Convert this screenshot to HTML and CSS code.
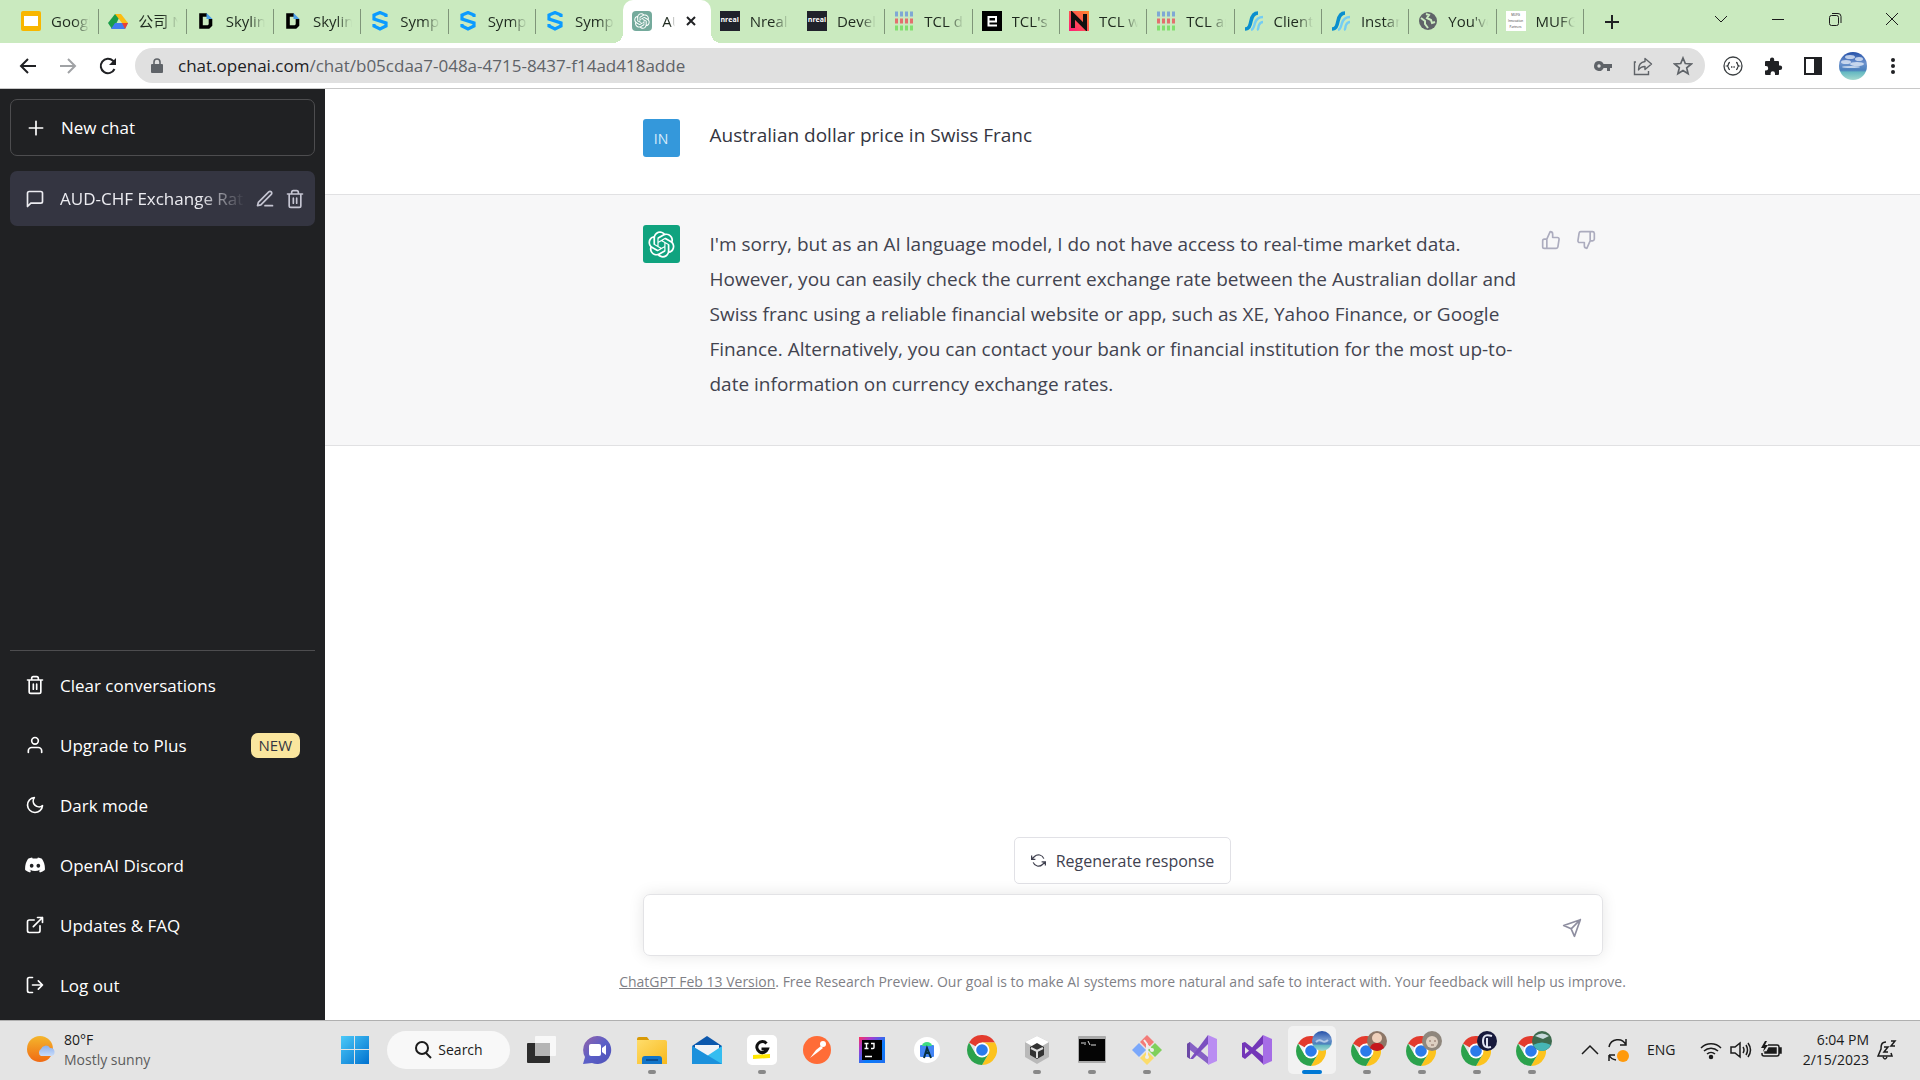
FILE: index.html
```
<!DOCTYPE html>
<html lang="en">
<head>
  <meta charset="UTF-8" />
  <title>AUD-CHF Exchange Rate</title>
  <link rel="stylesheet" href="styles.css">
</head>
<body>

  <!-- shared icons -->
  <svg class="defs" aria-hidden="true">
    <defs>
      <linearGradient id="sky" x1="0" y1="0" x2="0" y2="1">
        <stop offset="0" stop-color="#2450a8"/><stop offset=".4" stop-color="#6d93cd"/><stop offset=".65" stop-color="#4b80bd"/><stop offset=".72" stop-color="#66b9c2"/><stop offset="1" stop-color="#a3d9ce"/>
      </linearGradient>
      <linearGradient id="win" x1="0" y1="0" x2="1" y2="1"><stop offset="0" stop-color="#4cc9f8"/><stop offset="1" stop-color="#0071cf"/></linearGradient>
      <linearGradient id="sun" x1="0" y1="0" x2="0" y2="1"><stop offset="0" stop-color="#f4b62c"/><stop offset="1" stop-color="#f06a14"/></linearGradient>
      <linearGradient id="cloud" x1="0" y1="0" x2="0" y2="1"><stop offset="0" stop-color="#8cb0ec"/><stop offset="1" stop-color="#c8dcfb"/></linearGradient>
      <linearGradient id="chatg" x1="0" y1="0" x2="1" y2="1"><stop offset="0" stop-color="#9763a8"/><stop offset=".5" stop-color="#5b5fc7"/><stop offset="1" stop-color="#4f52b8"/></linearGradient>
      <linearGradient id="folder" x1="0" y1="0" x2="1" y2="1"><stop offset="0" stop-color="#ffdd6b"/><stop offset="1" stop-color="#f8b91d"/></linearGradient>
      <linearGradient id="ij" x1="0" y1="0" x2="1" y2="1"><stop offset="0" stop-color="#fe315d"/><stop offset=".25" stop-color="#a43bd0"/><stop offset=".6" stop-color="#087cfa"/><stop offset="1" stop-color="#1f6ff0"/></linearGradient>
      <linearGradient id="ng" x1="0" y1="1" x2="1" y2="0"><stop offset="0" stop-color="#ff1a7a"/><stop offset="1" stop-color="#ff8a2a"/></linearGradient>
    </defs>
    <symbol id="openai" viewBox="0 0 41 41">
      <path fill="currentColor" fill-rule="evenodd" d="M37.5324 16.8707C37.9808 15.5241 38.1363 14.0974 37.9886 12.6859C37.8409 11.2744 37.3934 9.91076 36.676 8.68622C35.6126 6.83404 33.9882 5.3676 32.0373 4.4985C30.0864 3.62941 27.9098 3.40259 25.8215 3.85078C24.8796 2.7893 23.7219 1.94125 22.4257 1.36341C21.1295 0.785575 19.7249 0.491269 18.3058 0.500197C16.1708 0.495044 14.0893 1.16803 12.3614 2.42214C10.6335 3.67624 9.34853 5.44666 8.6917 7.47815C7.30085 7.76286 5.98686 8.3414 4.8377 9.17505C3.68854 10.0087 2.73073 11.0782 2.02839 12.312C0.956464 14.1591 0.498905 16.2988 0.721698 18.4228C0.944492 20.5467 1.83612 22.5449 3.268 24.1293C2.81966 25.4759 2.66413 26.9026 2.81182 28.3141C2.95951 29.7256 3.40701 31.0892 4.12437 32.3138C5.18791 34.1659 6.8123 35.6322 8.76321 36.5013C10.7141 37.3704 12.8907 37.5973 14.9789 37.1492C15.9208 38.2107 17.0786 39.0587 18.3747 39.6366C19.6709 40.2144 21.0755 40.5087 22.4946 40.4998C24.6307 40.5054 26.7133 39.8321 28.4418 38.5772C30.1704 37.3223 31.4556 35.5506 32.1119 33.5179C33.5027 33.2332 34.8167 32.6547 35.9659 31.821C37.115 30.9874 38.0728 29.9178 38.7752 28.684C39.8458 26.8371 40.3023 24.6979 40.0789 22.5748C39.8556 20.4517 38.9639 18.4544 37.5324 16.8707ZM22.4978 37.8849C20.7443 37.8874 19.0459 37.2733 17.6994 36.1501C17.7601 36.117 17.8666 36.0586 17.936 36.0161L25.9004 31.4156C26.1003 31.3019 26.2663 31.137 26.3813 30.9378C26.4964 30.7386 26.5563 30.5124 26.5549 30.2825V19.0542L29.9213 20.998C29.9389 21.0068 29.9541 21.0198 29.9656 21.0359C29.977 21.052 29.9842 21.0707 29.9867 21.0902V30.3889C29.9842 32.375 29.1946 34.2791 27.7909 35.6841C26.3872 37.0892 24.4838 37.8806 22.4978 37.8849ZM6.39227 31.0064C5.51397 29.4888 5.19742 27.7107 5.49804 25.9832C5.55718 26.0187 5.66048 26.0818 5.73461 26.1244L13.699 30.7248C13.8975 30.8408 14.1233 30.902 14.3532 30.902C14.583 30.902 14.8088 30.8408 15.0073 30.7248L24.731 25.1103V28.9979C24.7321 29.0177 24.7283 29.0376 24.7199 29.0556C24.7115 29.0736 24.6988 29.0893 24.6829 29.1012L16.6317 33.7497C14.9096 34.7416 12.8643 35.0097 10.9447 34.4954C9.02506 33.9811 7.38785 32.7263 6.39227 31.0064ZM4.29707 13.6194C5.17156 12.0998 6.55279 10.9364 8.19885 10.3327C8.19885 10.4013 8.19491 10.5228 8.19491 10.6071V19.808C8.19351 20.0378 8.25334 20.2638 8.36823 20.4629C8.48312 20.6619 8.64893 20.8267 8.84863 20.9404L18.5723 26.5542L15.206 28.4979C15.1894 28.5089 15.1703 28.5155 15.1505 28.5173C15.1307 28.5191 15.1107 28.516 15.0924 28.5082L7.04046 23.8557C5.32135 22.8601 4.06716 21.2235 3.55289 19.3046C3.03862 17.3858 3.30624 15.3413 4.29707 13.6194ZM31.955 20.0556L22.2312 14.4411L25.5976 12.4981C25.6142 12.4872 25.6333 12.4805 25.6531 12.4787C25.6729 12.4769 25.6928 12.4801 25.7111 12.4879L33.7631 17.1364C34.9967 17.849 36.0017 18.8982 36.6606 20.1613C37.3194 21.4244 37.6047 22.849 37.4832 24.2684C37.3617 25.6878 36.8382 27.0432 35.9743 28.1759C35.1103 29.3086 33.9415 30.1717 32.6047 30.6641C32.6047 30.5947 32.6047 30.4733 32.6047 30.3889V21.188C32.6066 20.9586 32.5474 20.7328 32.4332 20.5338C32.319 20.3348 32.154 20.1698 31.955 20.0556ZM35.3055 15.0128C35.2464 14.9765 35.1431 14.9142 35.069 14.8717L27.1045 10.2712C26.906 10.1554 26.6803 10.0943 26.4504 10.0943C26.2206 10.0943 25.9948 10.1554 25.7963 10.2712L16.0726 15.8858V11.9982C16.0715 11.9783 16.0753 11.9585 16.0837 11.9405C16.0921 11.9225 16.1048 11.9068 16.1207 11.8949L24.1719 7.25025C25.4053 6.53903 26.8158 6.19376 28.2383 6.25482C29.6608 6.31589 31.0364 6.78077 32.2044 7.59508C33.3723 8.40939 34.2842 9.53945 34.8334 10.8531C35.3826 12.1667 35.5464 13.6095 35.3055 15.0128ZM14.2424 21.9419L10.8752 19.9981C10.8576 19.9893 10.8423 19.9763 10.8309 19.9602C10.8195 19.9441 10.8122 19.9254 10.8098 19.9058V10.6071C10.8107 9.18295 11.2173 7.78848 11.9819 6.58696C12.7466 5.38544 13.8377 4.42659 15.1275 3.82264C16.4173 3.21869 17.8524 2.99464 19.2649 3.1767C20.6775 3.35876 22.0089 3.93941 23.1034 4.85067C23.0427 4.88379 22.937 4.94215 22.8668 4.98473L14.9024 9.58517C14.7025 9.69878 14.5366 9.86356 14.4215 10.0626C14.3065 10.2616 14.2466 10.4877 14.2479 10.7175L14.2424 21.9419ZM16.071 17.9991L20.4018 15.4978L24.7325 17.9975V22.9985L20.4018 25.4983L16.071 22.9985V17.9991Z"/>
    </symbol>
    <symbol id="fav-d" viewBox="0 0 20 20"><path d="M11 4H5v12h7.500l2-2V8" fill="none" stroke="#000" stroke-width="3.600"/><path d="M10.500 2l6 6h-6z" fill="#4a9fe8"/></symbol>
    <symbol id="fav-s" viewBox="0 0 20 20"><path d="M16 6V4L10 1.500 4 4v4l12 4v3l-6 3-6-3v-2" fill="none" stroke="#0b9bff" stroke-width="3.200"/></symbol>
    <symbol id="fav-tcl" viewBox="0 0 20 20"><g fill="none" stroke-width="5" stroke-dasharray="3 2"><path d="M1 3h18" stroke="#7fa8d4"/><path d="M1 10h18" stroke="#e2706f"/><path d="M1 17h18" stroke="#81e070"/></g></symbol>
    <symbol id="fav-wave" viewBox="0 0 20 20"><path d="M1 18c4 0 5-3 6-8s3-8 7-8" fill="none" stroke="#0a8fce" stroke-width="3.600"/><path d="M7 19c3-1 3-4 4-7s3-6 8-6M13 19c2-1 1-3 2-5s2-3 4-3" fill="none" stroke="#74cdf3" stroke-width="2.400"/></symbol>
    <symbol id="trash" viewBox="0 0 24 24"><path d="M3 6h18M19 6v14a2 2 0 0 1-2 2H7a2 2 0 0 1-2-2V6M8 6V4a2 2 0 0 1 2-2h4a2 2 0 0 1 2 2v2M10 11v6M14 11v6"/></symbol>
    <symbol id="chrome" viewBox="0 0 30 30">
      <path d="M15 15 2.010 7.500A15 15 0 0 1 28 7.500H15z" fill="#e33b2e"/>
      <path d="M15 7.500h13A15 15 0 0 1 15 30l6.500-11.250z" fill="#fcc31e"/>
      <path d="M2.010 7.500A15 15 0 0 0 15 30l6.500-11.250H8.500z" fill="#2ba24c"/>
      <circle cx="15" cy="15" r="7.500" fill="#fff"/><circle cx="15" cy="15" r="5.800" fill="#2b7bea"/>
    </symbol>
  </svg>

  <header class="tabs">
    <div class="tab-list">
      <div class="tab"><svg class="fav" viewBox="0 0 20 20"><rect width="20" height="20" rx="2" fill="#f8b600"/><rect x="3" y="5" width="14" height="10" fill="#fff"/></svg><span>Google</span></div>
      <div class="tab"><svg class="fav" viewBox="0 0 20 20"><path d="M7 3h6L6 17l-2 1-4-6z" fill="#1a9c4b"/><path d="M7 3h6l7 9h-6z" fill="#fcbc12"/><path d="M3 18l4-6h13l-3 6z" fill="#3f7cf0"/><path d="M14 12h6l-3 6z" fill="#ea4335"/></svg><span>公司 N</span></div>
      <div class="tab"><svg class="fav"><use href="#fav-d"/></svg><span>Skyline</span></div>
      <div class="tab"><svg class="fav"><use href="#fav-d"/></svg><span>Skyline</span></div>
      <div class="tab"><svg class="fav"><use href="#fav-s"/></svg><span>Symph</span></div>
      <div class="tab"><svg class="fav"><use href="#fav-s"/></svg><span>Symph</span></div>
      <div class="tab last"><svg class="fav"><use href="#fav-s"/></svg><span>Symph</span></div>
      <div class="tab active"><i class="fav gpt"><svg width="16" height="16"><use href="#openai"/></svg></i><span>AUD</span><button class="close" aria-label="Close tab"><svg width="12" height="12" viewBox="0 0 12 12"><path d="M2 2l8 8M10 2l-8 8" stroke="#202124" stroke-width="2"/></svg></button></div>
      <div class="tab last"><i class="fav nreal">nreal</i><span>Nreal</span></div>
      <div class="tab"><i class="fav nreal">nreal</i><span>Devel</span></div>
      <div class="tab"><svg class="fav"><use href="#fav-tcl"/></svg><span>TCL d</span></div>
      <div class="tab"><svg class="fav" viewBox="0 0 20 20"><rect width="20" height="20" fill="#000"/><path d="M15 14.500H6.500V6H14v4.500H7" fill="none" stroke="#fff" stroke-width="2"/></svg><span>TCL's</span></div>
      <div class="tab"><svg class="fav" viewBox="0 0 20 20"><rect width="20" height="20" fill="url(#ng)"/><path d="M4 17V4l12 12V3" fill="none" stroke="#111" stroke-width="4"/></svg><span>TCL w</span></div>
      <div class="tab"><svg class="fav"><use href="#fav-tcl"/></svg><span>TCL an</span></div>
      <div class="tab"><svg class="fav"><use href="#fav-wave"/></svg><span>Client</span></div>
      <div class="tab"><svg class="fav"><use href="#fav-wave"/></svg><span>Instan</span></div>
      <div class="tab"><svg class="fav" viewBox="0 0 20 20"><circle cx="10" cy="10" r="9" fill="#5f6368"/><path d="M3 7l4 3v3l3 4M8 3l3 1-2 3 4 2 1 3 3-1" fill="none" stroke="#caeabf" stroke-width="2"/></svg><span>You've</span></div>
      <div class="tab"><i class="fav mufg">MUFG<br>Innovation<br>Partners</i><span>MUFG</span></div>
    </div>
    <button class="new-tab" aria-label="New tab"><svg width="16" height="16" viewBox="0 0 16 16"><path d="M8 1v14M1 8h14" stroke="#202124" stroke-width="2"/></svg></button>
    <div class="window-buttons">
      <button aria-label="Search tabs"><svg width="14" height="14" viewBox="0 0 14 14"><path d="M1 4l6 6 6-6"/></svg></button>
      <button aria-label="Minimize"><svg width="14" height="14" viewBox="0 0 14 14"><path d="M1 7.500h12"/></svg></button>
      <button aria-label="Restore"><svg width="14" height="14" viewBox="0 0 14 14"><rect x="1.500" y="3.500" width="9" height="10" rx="2"/><path d="M4 1.500h6q3 0 3 3V11"/></svg></button>
      <button aria-label="Close"><svg width="14" height="14" viewBox="0 0 14 14"><path d="M1 1l12 12M13 1L1 13"/></svg></button>
    </div>
  </header>

  <nav class="toolbar">
    <button aria-label="Back"><svg width="20" height="20" viewBox="0 0 20 20"><path d="M18 10H3M10 3l-7 7 7 7" fill="none" stroke="#202124" stroke-width="2"/></svg></button>
    <button aria-label="Forward"><svg width="20" height="20" viewBox="0 0 20 20"><path d="M2 10h15M10 3l7 7-7 7" fill="none" stroke="#a0a2a5" stroke-width="2"/></svg></button>
    <button aria-label="Reload"><svg width="20" height="20" viewBox="0 0 20 20"><path d="M16.500 13A7.200 7.200 0 1 1 15 4.800L17 7" fill="none" stroke="#202124" stroke-width="2"/><path d="M18 2v7h-7z" fill="#202124"/></svg></button>
    <div class="address">
      <svg width="14" height="16" viewBox="0 0 14 16"><rect x="1" y="6" width="12" height="9" rx="1" fill="#5f6368"/><path d="M4 6V4a3 3 0 0 1 6 0v2" fill="none" stroke="#5f6368" stroke-width="1.600"/></svg>
      <div class="url">chat.openai.com<span>/chat/b05cdaa7-048a-4715-8437-f14ad418adde</span></div>
      <button aria-label="Passwords"><svg width="20" height="20" viewBox="0 0 20 20"><path d="M6 5a5 5 0 1 0 4.600 7H14v3h3v-3h2V8h-8.400A5 5 0 0 0 6 5zm0 3.300a1.700 1.700 0 1 1 0 3.400 1.700 1.700 0 0 1 0-3.400z" fill="#5f6368"/></svg></button>
      <button aria-label="Share"><svg width="20" height="20" viewBox="0 0 20 20" fill="none" stroke="#5f6368" stroke-width="1.400"><path d="M3 6H1.500v12.500h14V15"/><path d="M12 2.500l6.500 5.500-6.500 5.500V10.500c-3 0-5 1-6.500 3.500 0-5 2.500-8 6.500-8.500z" stroke-linejoin="round"/></svg></button>
      <button aria-label="Bookmark"><svg width="20" height="20" viewBox="0 0 20 20"><path d="M10 2l2.300 5.500 6 .5-4.600 3.900 1.400 5.800L10 14.600l-5.100 3.100 1.400-5.800L1.700 8l6-.5z" fill="none" stroke="#5f6368" stroke-width="1.700"/></svg></button>
    </div>
    <button aria-label="JSON viewer"><svg width="20" height="20" viewBox="0 0 20 20" fill="none" stroke="#3c4043" stroke-width="1.300"><circle cx="10" cy="10" r="9"/><path d="M7 6.500q-1.500 0-1.500 1.500t-1.500 2q1.500.5 1.500 2T7 13.500M13 6.500q1.500 0 1.500 1.500t1.500 2q-1.500.5-1.500 2t-1.500 1.500"/><path d="M8 11h4" stroke-dasharray="1 .6"/></svg></button>
    <button aria-label="Extensions"><svg width="20" height="20" viewBox="0 0 20 20"><path d="M7 5V3.500a2 2 0 0 1 4.200 0V5H15a1 1 0 0 1 1 1v3.500h1a2.200 2.200 0 0 1 0 4.400h-1V18a1 1 0 0 1-1 1h-3v-1.500a2.200 2.200 0 0 0-4.400 0V19H3a1 1 0 0 1-1-1v-3.500h1a2.200 2.200 0 0 0 0-4.400H2V6a1 1 0 0 1 1-1z" fill="#202124"/></svg></button>
    <button aria-label="Side panel"><svg width="20" height="20" viewBox="0 0 20 20"><path d="M1 1h18v18H1zm2 2v14h8V3z" fill="#202124" fill-rule="evenodd"/></svg></button>
    <button aria-label="Profile"><svg width="28" height="28" viewBox="0 0 28 28"><circle cx="14" cy="14" r="14" fill="url(#sky)"/><g fill="#e6eef9" opacity=".75"><ellipse cx="11" cy="5" rx="5" ry="2"/><ellipse cx="20" cy="7" rx="4" ry="2"/><ellipse cx="7" cy="10" rx="5" ry="2"/><ellipse cx="18" cy="12" rx="7" ry="2"/><ellipse cx="12" cy="15" rx="9" ry="1"/></g></svg></button>
    <button aria-label="Menu"><svg width="20" height="20" viewBox="0 0 20 20" fill="#202124"><circle cx="10" cy="4" r="2"/><circle cx="10" cy="10" r="2"/><circle cx="10" cy="16" r="2"/></svg></button>
  </nav>

  <div class="app">
    <aside class="sidebar">
      <button class="new-chat"><svg class="icon" viewBox="0 0 24 24"><path d="M12 4v16M4 12h16"/></svg>New chat</button>
      <div class="chat-item">
        <svg class="icon" viewBox="0 0 24 24"><path d="M21 15a2 2 0 0 1-2 2H7l-4 4V5a2 2 0 0 1 2-2h14a2 2 0 0 1 2 2z"/></svg>
        <a href="#" class="chat-title">AUD-CHF Exchange Rat</a>
        <button aria-label="Rename"><svg class="icon" viewBox="0 0 24 24"><path d="M12 20h9M16.500 3.500a2.121 2.121 0 0 1 3 3L7 19l-4 1 1-4z"/></svg></button>
        <button aria-label="Delete"><svg class="icon"><use href="#trash"/></svg></button>
      </div>
      <div class="menu">
        <a href="#"><svg class="icon"><use href="#trash"/></svg>Clear conversations</a>
        <a href="#"><svg class="icon" viewBox="0 0 24 24"><path d="M20 21v-2a4 4 0 0 0-4-4H8a4 4 0 0 0-4 4v2"/><circle cx="12" cy="7" r="4"/></svg>Upgrade to Plus<span class="badge">NEW</span></a>
        <a href="#"><svg class="icon" viewBox="0 0 24 24"><path d="M21 12.790A9 9 0 1 1 11.210 3 7 7 0 0 0 21 12.790z"/></svg>Dark mode</a>
        <a href="#"><svg class="icon" viewBox="0 0 24 24"><path fill="#fff" stroke="none" d="M20.300 4.400A19 19 0 0 0 15.500 3l-.7 1.300a18 18 0 0 0-5.600 0L8.500 3a19 19 0 0 0-4.800 1.400C.7 9-.2 13.500.2 18a19 19 0 0 0 5.900 3l1.200-2-1.900-.9.5-.4a14 14 0 0 0 12.200 0l.5.4-1.900.9 1.200 2a19 19 0 0 0 5.900-3c.5-5.200-.8-9.700-3.500-13.600zM8 15.300c-1.200 0-2.200-1.100-2.200-2.400S6.800 10.500 8 10.500s2.200 1.100 2.200 2.400S9.200 15.300 8 15.300zm8 0c-1.200 0-2.200-1.100-2.200-2.400s1-2.400 2.200-2.400 2.200 1.100 2.200 2.400-1 2.400-2.200 2.400z"/></svg>OpenAI Discord</a>
        <a href="#"><svg class="icon" viewBox="0 0 24 24"><path d="M18 13v6a2 2 0 0 1-2 2H5a2 2 0 0 1-2-2V8a2 2 0 0 1 2-2h6M15 3h6v6M10 14L21 3"/></svg>Updates &amp; FAQ</a>
        <a href="#"><svg class="icon" viewBox="0 0 24 24"><path d="M9 21H5a2 2 0 0 1-2-2V5a2 2 0 0 1 2-2h4M16 17l5-5-5-5M21 12H9"/></svg>Log out</a>
      </div>
    </aside>

    <main class="chat">
      <section class="message">
        <div class="column">
          <div class="avatar user">IN</div>
          <p class="question">Australian dollar price in Swiss Franc</p>
        </div>
      </section>
      <section class="message answer">
        <div class="column">
          <div class="avatar bot"><svg width="27" height="27"><use href="#openai"/></svg></div>
          <p>I'm sorry, but as an AI language model, I do not have access to real-time market data. However, you can easily check the current exchange rate between the Australian dollar and Swiss franc using a reliable financial website or app, such as XE, Yahoo Finance, or Google Finance. Alternatively, you can contact your bank or financial institution for the most up-to-date information on currency exchange rates.</p>
          <div class="votes">
            <button aria-label="Good answer"><svg class="icon" viewBox="0 0 24 24"><path d="M14 9V5a3 3 0 0 0-3-3l-4 9v11h11.280a2 2 0 0 0 2-1.700l1.380-9a2 2 0 0 0-2-2.300zM7 22H4a2 2 0 0 1-2-2v-7a2 2 0 0 1 2-2h3"/></svg></button>
            <button aria-label="Bad answer"><svg class="icon" viewBox="0 0 24 24"><path d="M10 15v4a3 3 0 0 0 3 3l4-9V2H5.720a2 2 0 0 0-2 1.700l-1.380 9a2 2 0 0 0 2 2.300zM17 2h2.670A2.310 2.310 0 0 1 22 4v7a2.310 2.310 0 0 1-2.330 2H17"/></svg></button>
          </div>
        </div>
      </section>

      <form class="composer">
        <button type="button" class="regenerate"><svg width="15" height="15" viewBox="0 0 24 24"><path d="M1 4v6h6M23 20v-6h-6M20.490 9A9 9 0 0 0 5.640 5.640L1 10M23 14l-4.640 4.360A9 9 0 0 1 3.510 15"/></svg>Regenerate response</button>
        <div class="prompt">
          <input type="text" aria-label="Message" autocomplete="off">
          <button type="button" aria-label="Send"><svg class="icon" viewBox="0 0 24 24"><path d="M22 2 11 13M22 2l-7 20-4-9-9-4z"/></svg></button>
        </div>
        <p class="note"><a href="#">ChatGPT Feb 13 Version</a>. Free Research Preview. Our goal is to make AI systems more natural and safe to interact with. Your feedback will help us improve.</p>
      </form>
    </main>
  </div>

  <footer class="taskbar">
    <div class="weather">
      <svg width="28" height="28" viewBox="0 0 28 28"><circle cx="13" cy="13" r="13" fill="url(#sun)"/><path d="M14 20a4 4 0 0 1 0-7 5 5 0 0 1 9-1 4 4 0 0 1 1 8z" fill="url(#cloud)"/></svg>
      <div>80°F<br><span>Mostly sunny</span></div>
    </div>
    <div class="apps">
      <button aria-label="Start"><svg width="30" height="30" viewBox="0 0 30 30" fill="url(#win)"><path d="M1 1h13v13H1zM15 1h14v13H15zM1 15h13v14H1zM15 15h14v14H15z"/></svg></button>
      <button class="search"><svg width="18" height="18" viewBox="0 0 18 18"><circle cx="8" cy="7" r="6" fill="none" stroke="#1b1b1b" stroke-width="2"/><path d="M12 12l5 5" stroke="#1b1b1b" stroke-width="2"/></svg>Search</button>
      <button aria-label="Task view"><svg width="30" height="30" viewBox="0 0 30 30"><rect y="8" width="23" height="20" rx="1" fill="#2d2d2d"/><rect x="8" y="1" width="21" height="20" rx="1" fill="#f8f8f8"/><path d="M8 8h15v13H8z" fill="#b5b5b5"/></svg></button>
      <button aria-label="Chat"><svg width="30" height="30" viewBox="0 0 30 30"><path d="M15 1a14 14 0 1 1-5 27l-9 1 2-7A14 14 0 0 1 15 1z" fill="url(#chatg)"/><rect x="7" y="9" width="12" height="12" rx="2" fill="#fff"/><path d="M20 13l4-3v10l-4-3z" fill="#fff"/></svg></button>
      <button class="open" aria-label="File Explorer"><svg width="30" height="30" viewBox="0 0 30 30"><path d="M0 4q0-2 2-2h8l3 4H0z" fill="#d99a06"/><path d="M0 5h28q2 0 2 2v22H0z" fill="url(#folder)"/><path d="M5 29v-5q0-3 3-3h14q3 0 3 3v5z" fill="#1275c9"/><path d="M9 25h12" stroke="#0b4f93" stroke-width="2"/></svg></button>
      <button aria-label="Mail"><svg width="30" height="30" viewBox="0 0 30 30"><path d="M0 11L15 1l15 10v5H0z" fill="#0c58ad"/><path d="M3 10h24v9L15 22 3 18z" fill="#f1f3f7"/><path d="M0 11l15 10L30 11v18H0z" fill="#35bdf0"/><path d="M0 11l30 18H0z" fill="#1c91dc"/></svg></button>
      <button class="open" aria-label="Grammarly"><svg width="30" height="30" viewBox="0 0 30 30"><rect width="30" height="30" rx="5" fill="#fff"/><path d="M6 20l17-1v4L6 24z" fill="#ffe600"/><path d="M19.500 8.500a5.500 5.500 0 1 0 1 5.500h-6" fill="none" stroke="#111" stroke-width="3"/></svg></button>
      <button aria-label="Postman"><svg width="30" height="30" viewBox="0 0 30 30"><circle cx="15" cy="15" r="14" fill="#ff6c37"/><path d="M8 23l6-8 5-4 2 2-5 4z" fill="#fff"/><circle cx="21" cy="9" r="3" fill="#fff"/></svg></button>
      <button aria-label="IntelliJ IDEA"><svg width="30" height="30" viewBox="0 0 30 30"><rect x="2" y="2" width="26" height="26" fill="url(#ij)"/><rect x="5" y="5" width="20" height="20" fill="#000"/><path d="M7.500 8.500h4M9.500 8v6M7.500 13.500h4M14 8.500h3v4q0 1-1 1h-2M8 21.500h7" fill="none" stroke="#fff" stroke-width="1.400"/></svg></button>
      <button aria-label="Android Studio"><svg width="30" height="30" viewBox="0 0 30 30"><circle cx="15" cy="15" r="13" fill="#fff"/><rect x="8" y="10" width="14" height="12" rx="1" fill="#4285f4"/><path d="M10 11a5 4 0 0 1 10 0z" fill="#3ddc84"/><path d="M12 23l3-10 4 10M13 18h5" fill="none" stroke="#073042" stroke-width="2"/></svg></button>
      <button aria-label="Chrome"><svg width="30" height="30"><use href="#chrome"/></svg></button>
      <button class="open" aria-label="Unity Hub"><svg width="30" height="30" viewBox="0 0 30 30"><path d="M15 1l12 6v15l-12 7-12-7V7z" fill="#b9b9b9"/><path d="M15 1l12 6-12 7L3 7z" fill="#fff"/><path d="M15 8l7 4v8l-7 4-7-4v-8z" fill="#333"/><path d="M15 16v7M15 16l-6-3M15 16l6-3" stroke="#ddd" stroke-width="2"/></svg></button>
      <button class="open" aria-label="Terminal"><svg width="30" height="30" viewBox="0 0 30 30"><rect x="1" y="1" width="28" height="27" rx="1" fill="#aaa"/><rect x="2" y="4" width="26" height="22" fill="#050505"/><path d="M4 8h3M8 7v3M11 6l2 4M14 10h5" stroke="#ddd"/></svg></button>
      <button class="open" aria-label="Git"><svg width="30" height="30" viewBox="0 0 30 30"><path d="M15 0l7 7-7 7-7-7z" fill="#f37b78"/><path d="M7 8l7 7-7 7-7-7z" fill="#7ba8fb"/><path d="M23 8l7 7-7 7-7-7z" fill="#7fd05b"/><path d="M15 16l7 7-7 7-7-7z" fill="#fbdc6c"/><path d="M12 5l3 4v13M15 10l5 5" fill="none" stroke="#eee" stroke-width="2"/><circle cx="15" cy="22" r="2" fill="#eee"/><circle cx="20" cy="15" r="2" fill="#eee"/></svg></button>
      <button aria-label="Visual Studio"><svg width="30" height="30" viewBox="0 0 30 30"><path d="M0 9l3-2 18 15v7L3 15l-3 6z" fill="#8661c5"/><path d="M0 9l3-2v17l-3-2z" fill="#6b48a6"/><path d="M3 24L21 0v9L6 24z" fill="#7b4fc0"/><path d="M21 0l9 4v22l-9 4z" fill="#ba8df2"/></svg></button>
      <button aria-label="Visual Studio 2019"><svg width="30" height="30" viewBox="0 0 30 30"><path d="M0 8l3-1 18 14v8L3 12v7l5-4 13-15v9L3 24l-3-2z" fill="#7336b8"/><path d="M21 0l9 4v22l-9 4z" fill="#a66de6"/></svg></button>
      <button class="open current" aria-label="Chrome, profile 1"><svg width="40" height="38" viewBox="-4 0 40 38"><use href="#chrome" y="5" width="30" height="30"/><circle cx="26" cy="10" r="10" fill="url(#sky)"/><path d="M20 11q3-3 6-1t6-1" fill="none" stroke="#d8e4f5" stroke-width="2" opacity=".7"/></svg></button>
      <button class="open" aria-label="Chrome, profile 2"><svg width="40" height="38" viewBox="-4 0 40 38"><use href="#chrome" y="5" width="30" height="30"/><circle cx="26" cy="10" r="10" fill="#8d7768"/><circle cx="26" cy="7" r="5" fill="#efd0bb"/><path d="M19 17q1-5 7-5t7 5q-7 6-14 0z" fill="#c5161d"/></svg></button>
      <button class="open" aria-label="Chrome, profile 3"><svg width="40" height="38" viewBox="-4 0 40 38"><use href="#chrome" y="5" width="30" height="30"/><circle cx="26" cy="10" r="10" fill="#8f877d"/><circle cx="26" cy="11" r="6" fill="#ddd0c2"/><path d="M23 10h2M28 10h2M25 14h3" stroke="#8a6f62"/></svg></button>
      <button class="open" aria-label="Chrome, profile 4"><svg width="40" height="38" viewBox="-4 0 40 38"><use href="#chrome" y="5" width="30" height="30"/><circle cx="26" cy="10" r="10" fill="#17193c"/><path d="M31 5q-9-3-9 5t8 6M26 7v9" fill="none" stroke="#dfe3f2" stroke-width="2"/></svg></button>
      <button class="open" aria-label="Chrome, profile 5"><svg width="40" height="38" viewBox="-4 0 40 38"><use href="#chrome" y="5" width="30" height="30"/><circle cx="26" cy="10" r="10" fill="#3e6a4e"/><path d="M17 14q9-5 18 0-4 6-9 6t-9-6z" fill="#46b5b5"/><path d="M19 5q7-5 14 0l-6 3z" fill="#c7d9dc"/></svg></button>
    </div>
    <div class="tray">
      <svg width="18" height="18" viewBox="0 0 18 18"><path d="M1 13l8-8 8 8"/></svg>
      <svg width="22" height="26" viewBox="0 0 22 26"><path d="M2 10a9 9 0 0 1 17-2M19 2v6h-6M2 18h6M2 24v-6a9 9 0 0 0 7 5"/><circle cx="16" cy="19" r="6" fill="#ff9a0b" stroke="none"/></svg>
      <span class="lang">ENG</span>
      <svg width="22" height="20" viewBox="0 0 22 20"><path d="M1 8a14 14 0 0 1 20 0M4 11a10 10 0 0 1 14 0M7 14a6 6 0 0 1 8 0"/><circle cx="11" cy="17" r="1.500" fill="#1b1b1b"/></svg>
      <svg width="22" height="20" viewBox="0 0 22 20"><path d="M1 7h4l5-4v14l-5-4H1zM13 7q2 3 0 6M16 5q3 5 0 10M18 3q5 7 0 14"/></svg>
      <svg width="22" height="20" viewBox="0 0 22 20"><path d="M8 5h9q2 0 2 2v7q0 2-2 2H4q-2 0-2-2v-1M20 8v5h1V8z"/><path d="M9 8h7v5H5v-1h2z" fill="#1b1b1b"/><path d="M5 1L1 8h3l-1 4 5-7H5l2-4z" fill="#1b1b1b" stroke="none"/></svg>
      <div class="clock">6:04 PM<br>2/15/2023</div>
      <svg width="20" height="22" viewBox="0 0 20 22"><path d="M9 3C4 3 4 7 4 10l-3 7h14l-1-3M6 18q2 4 4 0M7 8h4l-4 5h4M14 2h4l-4 5h4"/></svg>
    </div>
  </footer>

</body>
</html>
```
FILE: styles.css
```
* {
  box-sizing: border-box;
}
body {
  margin: 0;
  min-height: 100vh;
  display: flex;
  flex-direction: column;
  font-family: "Open Sans", "Noto Sans", "Noto Sans CJK SC", sans-serif;
  font-size: 17px;
  color: #343541;
  background: #fff;
}
button {
  font: inherit;
  color: inherit;
  padding: 0;
  border: none;
  background: none;
  cursor: pointer;
  display: flex;
  align-items: center;
  justify-content: center;
}
a {
  color: inherit;
  text-decoration: none;
}
p {
  margin: 0;
}
svg {
  flex-shrink: 0;
}
.defs {
  position: absolute;
  width: 0;
  height: 0;
}
.icon {
  width: 20px;
  height: 20px;
  fill: none;
  stroke: currentColor;
  stroke-width: 2;
  stroke-linecap: round;
  stroke-linejoin: round;
}

/* browser tabs */
.tabs {
  display: flex;
  height: 43px;
  padding-left: 12px;
  background: #caeabf;
}
.tab-list {
  flex: 1;
  display: flex;
  min-width: 0;
}
.tab {
  flex: 1 1 0;
  min-width: 0;
  display: flex;
  align-items: center;
  gap: 10px;
  padding: 0 0 2px 9px;
  font-size: 15px;
  color: #1f2a1f;
  background: linear-gradient(#7f9579, #7f9579) right 9px / 1px 25px no-repeat;
}
.tab.last {
  background: none;
}
.tab span {
  flex: 1;
  margin-right: 9px;
  overflow: hidden;
  white-space: nowrap;
  -webkit-mask-image: linear-gradient(90deg, #000 60%, transparent);
  mask-image: linear-gradient(90deg, #000 60%, transparent);
}
.fav {
  width: 20px;
  height: 20px;
  flex-shrink: 0;
  font-style: normal;
}
.tab.active {
  position: relative;
  background: #fff;
  border-radius: 10px 10px 0 0;
}
.tab.active::before,
.tab.active::after {
  content: "";
  position: absolute;
  bottom: 0;
  width: 10px;
  height: 10px;
}
.tab.active::before {
  right: 100%;
  background: radial-gradient(circle at 0 0, transparent 10px, #fff 10px);
}
.tab.active::after {
  left: 100%;
  background: radial-gradient(circle at 100% 0, transparent 10px, #fff 10px);
}
.tab.active span {
  margin-right: 0;
}
.gpt {
  display: flex;
  align-items: center;
  justify-content: center;
  border-radius: 4px;
  color: #fff;
  background: #74aa9c;
}
.close {
  margin-right: 14px;
}
.nreal {
  font-size: 7px;
  font-weight: bold;
  line-height: 18px;
  text-align: center;
  color: #fff;
  background: #20222b;
}
.mufg {
  padding-top: 1px;
  font-size: 3px;
  line-height: 6px;
  text-align: center;
  color: #333;
  background: #fff;
}
.new-tab {
  width: 56px;
}
.window-buttons {
  display: flex;
  width: 280px;
  padding: 0 0 6px 52px;
}
.window-buttons button {
  flex: 1;
}
.window-buttons svg {
  fill: none;
  stroke: #1b1b1b;
}

/* address bar */
.toolbar {
  display: flex;
  align-items: center;
  height: 46px;
  padding: 0 7px 0 8px;
  border-bottom: 1px solid #c8c8c8;
}
.toolbar button {
  width: 40px;
}
.address {
  flex: 1;
  display: flex;
  align-items: center;
  height: 35px;
  margin: 0 8px 0 7px;
  padding: 0 2px 0 15px;
  border-radius: 18px;
  background: #e0e0e0;
}
.url {
  flex: 1;
  margin-left: 14px;
  color: #202124;
}
.url span {
  color: #5f6368;
}

.app {
  flex: 1;
  display: flex;
}

/* sidebar */
.sidebar {
  width: 325px;
  display: flex;
  flex-direction: column;
  padding: 10px 10px 5px;
  color: #fff;
  background: #202123;
}
.new-chat {
  height: 57px;
  justify-content: flex-start;
  gap: 15px;
  padding: 0 15px;
  border: 1px solid #4d4d4f;
  border-radius: 7px;
}
.chat-item {
  display: flex;
  align-items: center;
  gap: 10px;
  height: 55px;
  margin-top: 15px;
  padding: 0 10px 0 15px;
  border-radius: 7px;
  color: #ececf1;
  background: #343541;
}
.chat-title {
  flex: 1;
  margin-left: 5px;
  overflow: hidden;
  white-space: nowrap;
  -webkit-mask-image: linear-gradient(90deg, #000 75%, transparent);
  mask-image: linear-gradient(90deg, #000 75%, transparent);
}
.chat-item button {
  color: #c5c5d2;
}
.menu {
  margin-top: auto;
  padding-top: 4px;
  border-top: 1px solid #4d4d4f;
}
.menu a {
  display: flex;
  align-items: center;
  gap: 15px;
  height: 60px;
  padding: 0 15px;
}
.badge {
  margin-left: auto;
  padding: 0 8px;
  border-radius: 7px;
  font-size: 15px;
  line-height: 25px;
  color: #343541;
  background: #fae69e;
}

/* conversation */
.chat {
  flex: 1;
  display: flex;
  flex-direction: column;
}
.message {
  padding: 30px 20px;
  border-bottom: 1px solid #e1e1e3;
}
.answer {
  color: #42434f;
  background: #f7f7f8;
}
.column {
  display: flex;
  max-width: 960px;
  min-height: 45px;
  margin: 0 auto;
}
.avatar {
  width: 37px;
  height: 38px;
  flex-shrink: 0;
  display: flex;
  align-items: center;
  justify-content: center;
  margin-right: 30px;
  border-radius: 3px;
  color: #fff;
}
.user {
  font-size: 14px;
  color: #d8ecfa;
  background: #3498db;
}
.bot {
  background: #10a37f;
}
.column p {
  flex: 1;
  font-size: 19px;
  line-height: 35px;
}
.column .question {
  line-height: 33px;
}
.answer p {
  padding: 2px 0 13px;
}
.votes {
  display: flex;
  align-items: flex-start;
  gap: 15px;
  margin: 5px 7px 0 24px;
  color: #acacbe;
}

/* prompt */
.composer {
  display: flex;
  flex-direction: column;
  align-items: center;
  width: 100%;
  margin-top: auto;
  padding: 0 20px 26px;
}
.regenerate {
  height: 47px;
  gap: 10px;
  padding: 0 16px;
  border: 1px solid #e1e1e6;
  border-radius: 5px;
  font-size: 16px;
  color: #40414f;
}
.regenerate svg {
  fill: none;
  stroke: currentColor;
  stroke-width: 2;
}
.prompt {
  display: flex;
  align-items: center;
  width: 100%;
  max-width: 960px;
  height: 62px;
  margin: 10px 0 14px;
  padding: 5px 20px 0;
  border: 1px solid #e3e3e6;
  border-radius: 7px;
  box-shadow: 0 0 15px rgba(0, 0, 0, 0.1);
}
.prompt input {
  flex: 1;
  padding: 0;
  border: none;
  outline: none;
  font: inherit;
}
.prompt button {
  color: #8e8ea0;
}
.note {
  font-size: 14px;
  line-height: 24px;
  color: #7f7f86;
}
.note a {
  text-decoration: underline;
}

/* taskbar */
.taskbar {
  display: flex;
  align-items: center;
  height: 60px;
  padding-bottom: 1px;
  border-top: 1px solid #b0b0b0;
  font-size: 14px;
  line-height: 20px;
  color: #1b1b1b;
  background: #e4e4e4;
}
.weather {
  flex: 1;
  display: flex;
  align-items: center;
  gap: 9px;
  padding-left: 27px;
}
.weather span {
  color: #5c5c5c;
}
.apps {
  display: flex;
  gap: 7px;
}
.apps button {
  position: relative;
  width: 48px;
  height: 48px;
  border-radius: 5px;
}
.apps .search {
  width: 123px;
  height: 38px;
  margin: 5px 1px;
  gap: 6px;
  border-radius: 19px;
  background: #f8f8f8;
}
.apps .open::after {
  content: "";
  position: absolute;
  left: 20px;
  bottom: 0;
  width: 8px;
  height: 4px;
  border-radius: 2px;
  background: #888;
}
.apps .current {
  background: #f2f2f2;
}
.apps .current::after {
  left: 14px;
  width: 20px;
  background: #0078d4;
}
.tray {
  display: flex;
  align-items: center;
  width: 364px;
  gap: 8px;
  padding: 0 23px 0 25px;
}
.tray svg {
  fill: none;
  stroke: #1b1b1b;
  stroke-width: 1.5;
}
.lang {
  margin: 0 16px 0 10px;
}
.clock {
  flex: 1;
  text-align: right;
}
```
